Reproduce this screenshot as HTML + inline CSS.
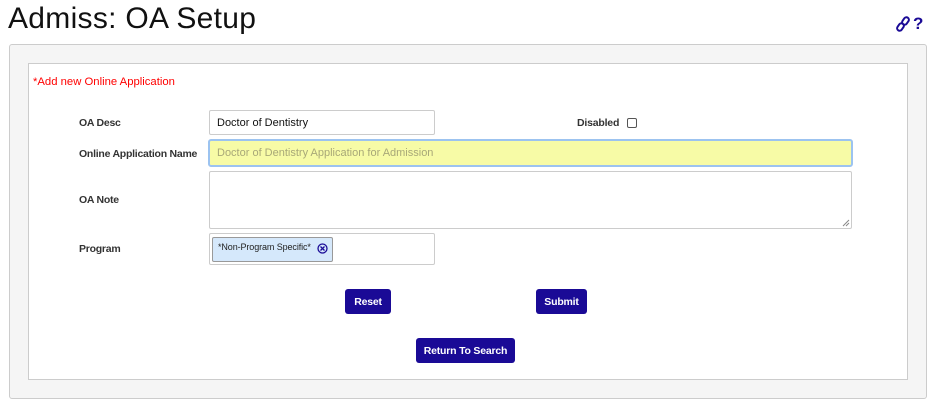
<!DOCTYPE html>
<html><head><meta charset="utf-8">
<style>
*{box-sizing:border-box}
body{margin:0;width:936px;height:409px;background:#fff;font-family:"Liberation Sans",Arial,sans-serif;position:relative;overflow:hidden}
.abs{position:absolute}
h1{position:absolute;left:8px;top:2px;margin:0;font-weight:normal;font-size:30px;color:#111;letter-spacing:0.3px}
.outer{left:9px;top:44px;width:918px;height:355px;background:#f5f5f5;border:1px solid #ccc;border-radius:3px}
.inner{left:28px;top:63px;width:880px;height:317px;background:#fff;border:1px solid #ccc}
.lbl{font-size:10.5px;font-weight:bold;color:#333;left:79px;letter-spacing:-0.25px}
.inp{border:1px solid #ccc;border-radius:2px;background:#fff;font-size:11px;color:#111;padding-left:7px;display:flex;align-items:center}
.btn{background:#1a0a96;color:#fff;font-size:10.5px;font-weight:bold;border-radius:3px;display:flex;align-items:center;justify-content:center;letter-spacing:-0.2px}
</style></head><body>
<h1>Admiss: OA Setup</h1>
<div class="abs" style="left:896px;top:15px;">
<svg width="14" height="18" viewBox="0 0 14 18"><g fill="none" stroke="#1a0a96" stroke-width="2"><rect x="2" y="8" width="5" height="8" rx="2.5" transform="rotate(35 4.5 12)"/><rect x="7" y="2" width="5" height="8" rx="2.5" transform="rotate(35 9.5 6)"/></g></svg>
</div>
<div class="abs" style="left:913px;top:14px;font-size:17px;font-weight:900;color:#1a0a96">?</div>
<div class="abs outer"></div>
<div class="abs inner"></div>
<div class="abs" style="left:33px;top:76px;font-size:11.3px;color:#f00">*Add new Online Application</div>

<div class="abs lbl" style="top:117px">OA Desc</div>
<div class="abs inp" style="left:209px;top:110px;width:226px;height:25px">Doctor of Dentistry</div>
<div class="abs" style="left:577px;top:117px;font-size:10.5px;font-weight:bold;color:#333;letter-spacing:-0.2px">Disabled</div>
<div class="abs" style="left:627px;top:118px;width:10px;height:10px;border:1px solid #555;border-radius:2px;background:#fff"></div>

<div class="abs lbl" style="top:148px">Online Application Name</div>
<div class="abs inp" style="left:208px;top:139px;width:645px;height:28px;background:#f7fba6;border:2px solid #9cc3f0;border-radius:3px;color:#a8a878;font-size:11px">Doctor of Dentistry Application for Admission</div>

<div class="abs lbl" style="top:194px">OA Note</div>
<div class="abs inp" style="left:209px;top:171px;width:643px;height:58px"></div>
<svg class="abs" style="left:842px;top:219px" width="8" height="8"><path d="M1 7L7 1M4 7L7 4" stroke="#888" stroke-width="1"/></svg>

<div class="abs lbl" style="top:243px">Program</div>
<div class="abs inp" style="left:209px;top:233px;width:226px;height:32px;padding:0"></div>
<div class="abs" style="left:212px;top:237px;width:121px;height:25px;background:#d5e8fb;border:1px solid #999;border-radius:2px;font-size:9px;color:#222;padding:4px 0 0 5px;letter-spacing:-0.1px">*Non-Program Specific*</div>
<svg class="abs" style="left:317px;top:243px" width="11" height="11"><circle cx="5.5" cy="5.5" r="4.5" fill="none" stroke="#1a0a96" stroke-width="1.3"/><path d="M3.5 3.5L7.5 7.5M7.5 3.5L3.5 7.5" stroke="#1a0a96" stroke-width="1.3"/></svg>

<div class="abs btn" style="left:345px;top:289px;width:46px;height:25px">Reset</div>
<div class="abs btn" style="left:536px;top:289px;width:51px;height:25px">Submit</div>
<div class="abs btn" style="left:416px;top:338px;width:99px;height:25px">Return To Search</div>
</body></html>
